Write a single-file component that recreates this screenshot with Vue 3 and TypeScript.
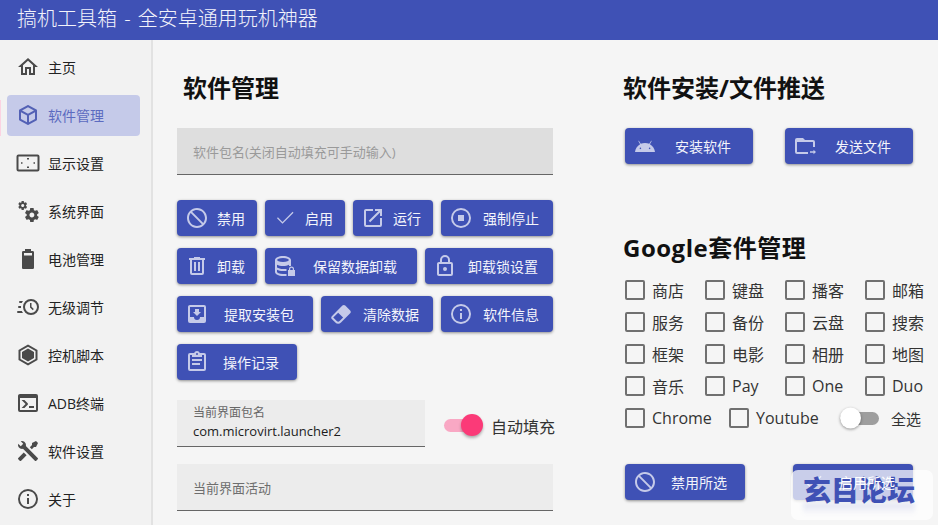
<script setup lang="ts">
const icons: Record<string, string> = {
  home: 'M12 5.69L17 10.19V18H15V12H9V18H7V10.19L12 5.69M12 3L2 12H5V20H11V14H13V20H19V12H22L12 3Z',
  cube: 'M21,16.5C21,16.88 20.79,17.21 20.47,17.38L12.57,21.82C12.41,21.94 12.21,22 12,22C11.79,22 11.59,21.94 11.43,21.82L3.53,17.38C3.21,17.21 3,16.88 3,16.5V7.5C3,7.12 3.21,6.79 3.53,6.62L11.43,2.18C11.59,2.06 11.79,2 12,2C12.21,2 12.41,2.06 12.57,2.18L20.47,6.62C20.79,6.79 21,7.12 21,7.5V16.5M12,4.15L6.04,7.5L12,10.85L17.96,7.5L12,4.15M5,15.91L11,19.29V12.58L5,9.21V15.91M19,15.91V9.21L13,12.58V19.29L19,15.91Z',
  screen: 'M2.5 3.5H21.5a2 2 0 0 1 2 2V18.5a2 2 0 0 1-2 2H2.5a2 2 0 0 1-2-2V5.500a2 2 0 0 1 2-2ZM2.500 5.500V18.500H21.500V5.500ZM11 7h2v1.500h-2zM11 15.500h2v1.500h-2zM5 11.200h1.500v1.600H5zM17.500 11.200H19v1.600h-1.500z',
  cogs: 'M15.9,18.45C17.25,18.45 18.35,17.35 18.35,16C18.35,14.65 17.25,13.55 15.9,13.55C14.54,13.55 13.45,14.65 13.45,16C13.45,17.35 14.54,18.45 15.9,18.45M21.1,16.68L22.58,17.84C22.71,17.95 22.75,18.13 22.66,18.29L21.26,20.71C21.17,20.86 21,20.92 20.83,20.86L19.09,20.16C18.73,20.44 18.33,20.67 17.91,20.85L17.64,22.7C17.62,22.87 17.47,23 17.3,23H14.5C14.32,23 14.18,22.87 14.15,22.7L13.89,20.85C13.46,20.67 13.07,20.44 12.71,20.16L10.96,20.86C10.81,20.92 10.62,20.86 10.54,20.71L9.14,18.29C9.05,18.13 9.09,17.95 9.22,17.84L10.7,16.68L10.65,16L10.7,15.31L9.22,14.16C9.09,14.05 9.05,13.86 9.14,13.71L10.54,11.29C10.62,11.13 10.81,11.07 10.96,11.13L12.71,11.84C13.07,11.56 13.46,11.32 13.89,11.15L14.15,9.29C14.18,9.13 14.32,9 14.5,9H17.3C17.47,9 17.62,9.13 17.64,9.29L17.91,11.15C18.33,11.32 18.73,11.56 19.09,11.84L20.83,11.13C21,11.07 21.17,11.13 21.26,11.29L22.66,13.71C22.75,13.86 22.71,14.05 22.58,14.16L21.1,15.31L21.15,16L21.1,16.68M6.69,8.07C7.56,8.07 8.26,7.37 8.26,6.5C8.26,5.63 7.56,4.92 6.69,4.92A1.58,1.58 0 0,0 5.11,6.5C5.11,7.37 5.82,8.07 6.69,8.07M10.03,6.94L11,7.68C11.07,7.75 11.09,7.87 11.03,7.97L10.13,9.53C10.08,9.63 9.96,9.67 9.86,9.63L8.74,9.18L8,9.62L7.81,10.81C7.79,10.92 7.7,11 7.59,11H5.79C5.67,11 5.58,10.92 5.56,10.81L5.4,9.62L4.63,9.18L3.5,9.63C3.41,9.67 3.3,9.63 3.24,9.53L2.34,7.97C2.28,7.87 2.31,7.75 2.39,7.68L3.34,6.94L3.31,6.5L3.34,6.06L2.39,5.32C2.31,5.25 2.28,5.13 2.34,5.03L3.24,3.47C3.3,3.37 3.41,3.33 3.5,3.37L4.63,3.82L5.4,3.38L5.56,2.19C5.58,2.08 5.67,2 5.79,2H7.59C7.7,2 7.79,2.08 7.81,2.19L8,3.38L8.74,3.82L9.86,3.37C9.96,3.33 10.08,3.37 10.13,3.47L11.03,5.03C11.09,5.13 11.07,5.25 11,5.32L10.03,6.06L10.06,6.5L10.03,6.94Z',
  battery: 'M16.67,4H15V2H9V4H7.33A1.33,1.33 0 0,0 6,5.33V20.67C6,21.4 6.6,22 7.33,22H16.67A1.33,1.33 0 0,0 18,20.67V5.33C18,4.6 17.4,4 16.67,4ZM8 6H16V8.500H8Z',
  clock: 'M15,4A8,8 0 0,1 23,12A8,8 0 0,1 15,20A8,8 0 0,1 7,12A8,8 0 0,1 15,4M15,6A6,6 0 0,0 9,12A6,6 0 0,0 15,18A6,6 0 0,0 21,12A6,6 0 0,0 15,6M14,8H15.5V11.78L17.83,14.11L16.77,15.17L14,12.4V8M2,18A1,1 0 0,1 1,17A1,1 0 0,1 2,16H5.83C6.14,16.71 6.54,17.38 7,18H2M3,13A1,1 0 0,1 2,12A1,1 0 0,1 3,11H5.05L5,12L5.05,13H3M4,8A1,1 0 0,1 3,7A1,1 0 0,1 4,6H7C6.54,6.62 6.14,7.29 5.83,8H4Z',
  hexagon: 'M12 1.500L21.500 7V17L12 22.500L2.500 17V7ZM12 3.800L4.500 8.100V15.900L12 20.200L19.500 15.900V8.100ZM12 5.500L18 9V15L12 18.500L6 15V9Z',
  console: 'M20,19V7H4V19H20M20,3A2,2 0 0,1 22,5V19A2,2 0 0,1 20,21H4A2,2 0 0,1 2,19V5C2,3.89 2.9,3 4,3H20M13,17V15H18V17H13M9.58,13L5.57,9H8.4L11.7,12.3C12.09,12.69 12.09,13.33 11.7,13.72L8.42,17H5.59L9.58,13Z',
  tools: 'M21.71 20.29L20.29 21.71A1 1 0 0 1 18.88 21.71L7 9.85A3.81 3.81 0 0 1 6 10A4 4 0 0 1 2.22 4.7L4.76 7.24L5.29 6.71L6.71 5.29L7.24 4.76L4.7 2.22A4 4 0 0 1 10 6A3.81 3.81 0 0 1 9.85 7L21.71 18.88A1 1 0 0 1 21.71 20.29M2.29 18.88A1 1 0 0 0 2.29 20.29L3.71 21.71A1 1 0 0 0 5.12 21.71L10.59 16.25L7.76 13.42M20 2L16 4V6L13.83 8.17L15.83 10.17L18 8H20L22 4Z',
  info: 'M11,9H13V7H11M12,20C7.59,20 4,16.41 4,12C4,7.59 7.59,4 12,4C16.41,4 20,7.59 20,12C20,16.41 16.41,20 12,20M12,2A10,10 0 0,0 2,12A10,10 0 0,0 12,22A10,10 0 0,0 22,12A10,10 0 0,0 12,2M11,17H13V11H11V17Z',
  cancel: 'M12 2C17.5 2 22 6.5 22 12S17.5 22 12 22 2 17.5 2 12 6.5 2 12 2M12 4C10.1 4 8.4 4.6 7.1 5.7L18.3 16.9C19.3 15.5 20 13.8 20 12C20 7.6 16.4 4 12 4M16.9 18.3L5.7 7.1C4.6 8.4 4 10.1 4 12C4 16.4 7.6 20 12 20C13.9 20 15.6 19.4 16.9 18.3Z',
  check: 'M20.500 6.700L9.500 17.700L4 12.200L4.900 11.300L9.500 15.900L19.600 5.800Z',
  open: 'M14,3V5H17.59L7.76,14.83L9.17,16.24L19,6.41V10H21V3M19,19H5V5H12V3H5C3.89,3 3,3.9 3,5V19A2,2 0 0,0 5,21H19A2,2 0 0,0 21,19V12H19V19Z',
  stop: 'M12,2A10,10 0 0,0 2,12A10,10 0 0,0 12,22A10,10 0 0,0 22,12A10,10 0 0,0 12,2M12,4C16.41,4 20,7.59 20,12C20,16.41 16.41,20 12,20C7.59,20 4,16.41 4,12C4,7.59 7.59,4 12,4M9,9V15H15V9',
  trash: 'M9,3V4H4V6H5V19A2,2 0 0,0 7,21H17A2,2 0 0,0 19,19V6H20V4H15V3H9M7,6H17V19H7V6M9,8V17H11V8H9M13,8V17H15V8H13Z',
  dbLock: 'M10 2C5.600 2 2 3.800 2 6V18C2 20.200 5.600 22 10 22H13.500V20H10C6.100 20 4 18.500 4 18V15.700C5.500 16.600 7.600 17 10 17H13.500V15H10C7.600 15 5.400 14.400 4 13.500V10.800C5.600 11.600 7.700 12 10 12S14.400 11.600 16 10.800V12H18V6C18 3.800 14.400 2 10 2ZM10 4C13.900 4 16 5.500 16 6S13.900 8 10 8 4 6.500 4 6 6.100 4 10 4ZM15 16H16V15A2.500 2.500 0 0 1 21 15V16H22V22H15ZM17.200 16H19.800V15A1.300 1.300 0 0 0 17.200 15Z',
  lock: 'M12,17A2,2 0 0,0 14,15C14,13.89 13.1,13 12,13A2,2 0 0,0 10,15A2,2 0 0,0 12,17M18,20V10H6V20H18M18,8A2,2 0 0,1 20,10V20A2,2 0 0,1 18,22H6C4.89,22 4,21.1 4,20V10C4,8.89 4.9,8 6,8H7V6A5,5 0 0,1 12,1A5,5 0 0,1 17,6V8H18M12,3A3,3 0 0,0 9,6V8H15V6A3,3 0 0,0 12,3Z',
  inbox: 'M16,10H14V7H10V10H8L12,14M19,15H15A3,3 0 0,1 12,18A3,3 0 0,1 9,15H5V5H19M19,3H5C3.89,3 3,3.9 3,5V19A2,2 0 0,0 5,21H19A2,2 0 0,0 21,19V5A2,2 0 0,0 19,3Z',
  eraser: 'M16.24,3.56L21.19,8.5C21.97,9.29 21.97,10.55 21.19,11.34L12,20.53C10.44,22.09 7.91,22.09 6.34,20.53L2.81,17C2.03,16.21 2.03,14.95 2.81,14.16L13.41,3.56C14.2,2.78 15.46,2.78 16.24,3.56M4.22,15.58L7.76,19.11C8.54,19.9 9.8,19.9 10.59,19.11L14.12,15.58L9.17,10.63L4.22,15.58Z',
  clipboard: 'M19,3H14.82C14.4,1.84 13.3,1 12,1C10.7,1 9.6,1.84 9.18,3H5A2,2 0 0,0 3,5V19A2,2 0 0,0 5,21H19A2,2 0 0,0 21,19V5A2,2 0 0,0 19,3M12,3A1,1 0 0,1 13,4A1,1 0 0,1 12,5A1,1 0 0,1 11,4A1,1 0 0,1 12,3M7,7H17V5H19V19H5V5H7V7M17,11H7V9H17V11M15,15H7V13H15V15Z',
  android: 'M16.61 15.15C16.15 15.15 15.77 14.78 15.77 14.32S16.15 13.5 16.61 13.5H16.61C17.07 13.5 17.45 13.86 17.45 14.32C17.45 14.78 17.07 15.15 16.61 15.15M7.41 15.15C6.95 15.15 6.57 14.78 6.57 14.32C6.57 13.86 6.95 13.5 7.41 13.5H7.41C7.87 13.5 8.24 13.86 8.24 14.32C8.24 14.78 7.87 15.15 7.41 15.15M16.91 10.14L18.58 7.26C18.67 7.09 18.61 6.88 18.45 6.79C18.28 6.69 18.07 6.75 18 6.92L16.29 9.83C14.95 9.22 13.5 8.9 12 8.91C10.47 8.91 9 9.24 7.73 9.82L6.04 6.91C5.95 6.74 5.74 6.68 5.57 6.78C5.4 6.87 5.35 7.08 5.44 7.25L7.1 10.13C4.25 11.69 2.29 14.58 2 18H22C21.72 14.59 19.77 11.7 16.91 10.14H16.91Z',
  folder: 'M2 6A2 2 0 0 1 4 4H10L12 6H20A2 2 0 0 1 22 8V13H20V8H4V18H15V20H4A2 2 0 0 1 2 18ZM17 17.300H20.500V15.800L23 18L20.500 20.200V18.700H17Z',
}

const navItems = [
  { icon: 'home', label: '主页' },
  { icon: 'cube', label: '软件管理', active: true },
  { icon: 'screen', label: '显示设置' },
  { icon: 'cogs', label: '系统界面' },
  { icon: 'battery', label: '电池管理' },
  { icon: 'clock', label: '无级调节' },
  { icon: 'hexagon', label: '控机脚本' },
  { icon: 'console', label: 'ADB终端' },
  { icon: 'tools', label: '软件设置' },
  { icon: 'info', label: '关于' },
]

const actionRows = [
  [
    { icon: 'cancel', label: '禁用', size: 'w80' },
    { icon: 'check', label: '启用', size: 'w80' },
    { icon: 'open', label: '运行', size: 'w80' },
    { icon: 'stop', label: '强制停止', size: 'w112' },
  ],
  [
    { icon: 'trash', label: '卸载', size: 'w80' },
    { icon: 'dbLock', label: '保留数据卸载', size: 'w152' },
    { icon: 'lock', label: '卸载锁设置', size: 'w128' },
  ],
  [
    { icon: 'inbox', label: '提取安装包', size: 'w136' },
    { icon: 'eraser', label: '清除数据', size: 'w112' },
    { icon: 'info', label: '软件信息', size: 'w112' },
  ],
  [{ icon: 'clipboard', label: '操作记录', size: 'w120' }],
]

const suites = [
  '商店', '键盘', '播客', '邮箱',
  '服务', '备份', '云盘', '搜索',
  '框架', '电影', '相册', '地图',
  '音乐', 'Pay', 'One', 'Duo',
]
</script>

<template>
  <div class="app">
    <header class="topbar">搞机工具箱 - 全安卓通用玩机神器</header>
    <div class="body">
      <nav class="sidebar">
        <span class="indicator"></span>
        <a v-for="item in navItems" :key="item.label" class="nav-item" :class="{ active: item.active }">
          <svg class="nav-icon" viewBox="0 0 24 24"><path :d="icons[item.icon]" /></svg>
          <span>{{ item.label }}</span>
        </a>
      </nav>

      <main class="main">
        <section class="left">
          <h2 class="title">软件管理</h2>
          <div class="field dark">
            <span class="placeholder">软件包名(关闭自动填充可手动输入)</span>
          </div>

          <div class="actions">
            <div v-for="(row, i) in actionRows" :key="i" class="action-row">
              <button v-for="b in row" :key="b.label" class="btn" :class="b.size">
                <svg class="btn-icon" viewBox="0 0 24 24"><path :d="icons[b.icon]" /></svg>
                <span class="btn-text">{{ b.label }}</span>
              </button>
            </div>
          </div>

          <div class="package-row">
            <div class="field package">
              <span class="float-label">当前界面包名</span>
              <span class="value">com.microvirt.launcher2</span>
            </div>
            <span class="switch on"><i></i></span>
            <span class="switch-label">自动填充</span>
          </div>

          <div class="field activity">
            <span class="placeholder dim">当前界面活动</span>
          </div>
        </section>

        <section class="right">
          <h2 class="title">软件安装/文件推送</h2>
          <div class="install-row">
            <button class="btn w128">
              <svg class="btn-icon" viewBox="0 0 24 24"><path :d="icons.android" /></svg>
              <span class="btn-text">安装软件</span>
            </button>
            <button class="btn w128">
              <svg class="btn-icon" viewBox="0 0 24 24"><path :d="icons.folder" /></svg>
              <span class="btn-text">发送文件</span>
            </button>
          </div>

          <h2 class="title google">Google套件管理</h2>
          <div class="suite-grid">
            <label v-for="s in suites" :key="s" class="check">
              <span class="box"></span>{{ s }}
            </label>
          </div>
          <div class="suite-last">
            <label class="check chrome"><span class="box"></span>Chrome</label>
            <label class="check youtube"><span class="box"></span>Youtube</label>
            <span class="switch off"><i></i></span>
            <span class="select-all">全选</span>
          </div>

          <div class="suite-actions">
            <button class="btn w120">
              <svg class="btn-icon" viewBox="0 0 24 24"><path :d="icons.cancel" /></svg>
              <span class="btn-text">禁用所选</span>
            </button>
            <button class="btn w120">
              <svg class="btn-icon" viewBox="0 0 24 24"><path :d="icons.check" /></svg>
              <span class="btn-text over-mark">启用所选</span>
            </button>
          </div>
        </section>
      </main>
    </div>

    <div class="watermark">
      <span class="wm-text">玄目论坛</span>
      <span class="wm-reflect"></span>
    </div>
  </div>
</template>

<style scoped>
.app {
  position: relative;
  width: 938px;
  height: 525px;
  overflow: hidden;
  display: flex;
  flex-direction: column;
  background: #f5f5f5;
  color: #222;
  font-family: "Open Sans", "Noto Sans CJK SC", sans-serif;
}

.topbar {
  height: 40px;
  flex: none;
  padding: 0 0 6px 17px;
  box-sizing: border-box;
  display: flex;
  align-items: center;
  background: #3f51b5;
  color: #f2f3fb;
  font-size: 20px;
  font-weight: 300;
  white-space: pre;
  word-spacing: 2px;
}

.body {
  flex: 1;
  display: flex;
  min-height: 0;
}

.sidebar {
  position: relative;
  width: 153px;
  flex: none;
  box-sizing: border-box;
  padding: 7px 11px 0 7px;
  display: flex;
  flex-direction: column;
  gap: 7px;
  background: #f2f2f2;
  border-right: 2px solid #e2e2e2;
}

.indicator {
  position: absolute;
  left: 0;
  top: 60px;
  width: 1px;
  height: 36px;
  background: #fbd3e2;
}

.nav-item {
  height: 41px;
  flex: none;
  box-sizing: border-box;
  padding: 0 0 2px 9px;
  display: flex;
  align-items: center;
  gap: 8px;
  border-radius: 4px;
  font-size: 14px;
  color: #222;
}

.nav-item.active {
  background: #c5cae9;
  color: #5c6bc0;
}

.nav-icon {
  width: 24px;
  height: 24px;
  flex: none;
  fill: #4a4a4a;
}

.nav-item.active .nav-icon {
  fill: #5361b5;
}

.main {
  flex: 1;
  display: flex;
  min-width: 0;
}

.left {
  width: 376px;
  flex: none;
  margin-left: 24px;
  padding-top: 30px;
}

.right {
  width: 300px;
  flex: none;
  margin-left: 70px;
  padding-top: 30px;
}

.title {
  margin: 0;
  height: 36px;
  line-height: 36px;
  font-size: 24px;
  font-weight: 700;
  color: #111;
}

.left .title {
  margin-left: 6px;
}

.field {
  box-sizing: border-box;
  height: 47px;
  display: flex;
  flex-direction: column;
  justify-content: center;
  padding-left: 16px;
  border-bottom: 1px solid #666;
  background: #ececec;
}

.field.dark {
  margin-top: 22px;
  background: #dedede;
}

.placeholder {
  font-size: 13px;
  color: #9a9a9a;
}

.placeholder.dim {
  color: #6e6e6e;
}

.actions {
  margin-top: 25px;
  display: flex;
  flex-direction: column;
  gap: 12px;
}

.action-row {
  display: flex;
  gap: 8px;
}

.btn {
  height: 36px;
  flex: none;
  box-sizing: border-box;
  padding: 0 4px 0 8px;
  display: flex;
  align-items: center;
  border: 0;
  border-radius: 4px;
  background: #3f51b5;
  color: #f3f4fb;
  font-family: inherit;
  font-size: 14px;
  box-shadow: 0 1px 3px rgba(0, 0, 0, 0.42);
}

.w80 { width: 80px; }
.w112 { width: 112px; }
.w120 { width: 120px; }
.w128 { width: 128px; }
.w136 { width: 136px; }
.w152 { width: 152px; }

.btn-icon {
  width: 24px;
  height: 24px;
  flex: none;
  fill: #c5cae9;
}

.btn-text {
  flex: 1;
  text-align: center;
  white-space: nowrap;
}

/* the label of this button shows through the watermark */
.btn-text.over-mark {
  position: relative;
  z-index: 2;
  color: #fff;
}

.package-row {
  margin-top: 20px;
  display: flex;
  align-items: center;
}

.field.package {
  width: 248px;
  flex: none;
  margin-right: 20px;
  justify-content: flex-start;
  padding-top: 5px;
}

.float-label {
  font-size: 12px;
  line-height: 16px;
  color: #666;
}

.value {
  font-size: 13px;
  line-height: 20px;
  color: #1c1c1c;
}

.field.activity {
  margin-top: 17px;
}

.switch {
  position: relative;
  width: 38px;
  height: 13px;
  flex: none;
  border-radius: 7px;
}

.switch i {
  position: absolute;
  top: 50%;
  border-radius: 50%;
  transform: translateY(-50%);
}

.switch.on {
  margin: 3px 0 0 -1px;
  background: #f9a8c4;
}

.switch.on i {
  right: -1px;
  width: 22px;
  height: 22px;
  background: #fb3a78;
  box-shadow: 0 2px 3px rgba(0, 0, 0, 0.3);
}

.switch.off {
  width: 39px;
  background: #9e9e9e;
}

.switch.off i {
  left: 0;
  width: 21px;
  height: 21px;
  background: #fff;
  box-shadow: 0 1px 3px rgba(0, 0, 0, 0.4);
}

.switch-label {
  margin: 4px 0 0 9px;
  font-size: 16px;
  color: #333;
  white-space: nowrap;
}

.install-row {
  margin: 22px 0 0 2px;
  display: flex;
  gap: 32px;
}

.title.google {
  margin-top: 66px;
  letter-spacing: 0.5px;
}

.suite-grid {
  margin: 8px 0 0 2px;
  display: grid;
  grid-template-columns: repeat(4, 80px);
  grid-auto-rows: 32px;
}

.check {
  display: flex;
  align-items: center;
  font-size: 16px;
  color: #333;
  white-space: nowrap;
}

.box {
  box-sizing: border-box;
  width: 20px;
  height: 20px;
  flex: none;
  margin-right: 7px;
  border: 2px solid #707070;
  border-radius: 2px;
}

.suite-last {
  height: 32px;
  margin-left: 2px;
  display: flex;
  align-items: center;
}

.chrome { width: 104px; }
.youtube { width: 111px; }

.select-all {
  margin-left: 12px;
  font-size: 15px;
  color: #333;
}

.suite-actions {
  margin: 30px 0 0 2px;
  display: flex;
  gap: 48px;
}

.watermark {
  position: absolute;
  left: 791px;
  top: 470px;
  width: 142px;
  height: 50px;
  border-radius: 7px;
  background: rgba(255, 255, 255, 0.72);
  overflow: hidden;
  z-index: 1;
}

.wm-text {
  position: absolute;
  left: 12px;
  top: 6px;
  font-size: 28px;
  line-height: 28px;
  font-weight: 900;
  color: #3f51b5;
  white-space: nowrap;
}

.wm-reflect {
  position: absolute;
  left: 12px;
  top: 33px;
  width: 112px;
  height: 12px;
  background: linear-gradient(rgba(63, 81, 181, 0.14), rgba(63, 81, 181, 0));
  filter: blur(2px);
}
</style>
